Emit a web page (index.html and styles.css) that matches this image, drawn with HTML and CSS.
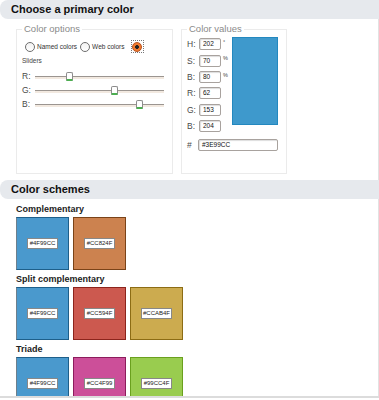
FILE: index.html
```html
<!DOCTYPE html>
<html>
<head>
<meta charset="utf-8">
<link rel="stylesheet" href="styles.css">
</head>
<body>
<div class="page">
  <div class="bar">Choose a primary color</div>
  <div class="primary">
    <fieldset class="box opts">
      <legend>Color options</legend>
      <div class="radios">
        <span class="radio"></span><span class="rlabel">Named colors</span>
        <span class="radio"></span><span class="rlabel">Web colors</span>
        <span class="focus"><span class="radio on"></span></span>
      </div>
      <div class="sltitle">Sliders</div>
      <div class="slider"><span class="slab">R:</span><div class="track"><span class="thumb" style="left:26%"></span></div></div>
      <div class="slider"><span class="slab">G:</span><div class="track"><span class="thumb" style="left:61%"></span></div></div>
      <div class="slider"><span class="slab">B:</span><div class="track"><span class="thumb" style="left:81%"></span></div></div>
    </fieldset>
    <fieldset class="box vals">
      <legend>Color values</legend>
      <div class="valgrid">
        <div class="fields">
          <div class="frow"><span class="flab">H:</span><span class="inp">202</span><span class="unit">°</span></div>
          <div class="frow"><span class="flab">S:</span><span class="inp">70</span><span class="unit">%</span></div>
          <div class="frow"><span class="flab">B:</span><span class="inp">80</span><span class="unit">%</span></div>
          <div class="frow"><span class="flab">R:</span><span class="inp">62</span></div>
          <div class="frow"><span class="flab">G:</span><span class="inp">153</span></div>
          <div class="frow"><span class="flab">B:</span><span class="inp">204</span></div>
        </div>
        <div class="preview"></div>
      </div>
      <div class="frow hexrow"><span class="flab">#</span><span class="inp hex">#3E99CC</span></div>
    </fieldset>
  </div>
  <div class="bar">Color schemes</div>
  <div class="schemes">
    <div class="stitle">Complementary</div>
    <div class="srow">
      <div class="sw blue"><span class="tag">#4F99CC</span></div>
      <div class="sw orange"><span class="tag">#CC824F</span></div>
    </div>
    <div class="stitle">Split complementary</div>
    <div class="srow">
      <div class="sw blue"><span class="tag">#4F99CC</span></div>
      <div class="sw red"><span class="tag">#CC594F</span></div>
      <div class="sw gold"><span class="tag">#CCAB4F</span></div>
    </div>
    <div class="stitle">Triade</div>
    <div class="srow">
      <div class="sw blue"><span class="tag">#4F99CC</span></div>
      <div class="sw magenta"><span class="tag">#CC4F99</span></div>
      <div class="sw green"><span class="tag">#99CC4F</span></div>
    </div>
  </div>
</div>
</body>
</html>
```

FILE: styles.css
```css
body {
  margin: 0;
  font-family: "Liberation Sans", Arial, sans-serif;
  background: #fff;
  color: #333;
}
.page {
  width: 379px;
  height: 396px;
  overflow: hidden;
  border-bottom: 2px solid #dcdcdc;
}
.bar {
  height: 19px;
  line-height: 19px;
  background: #e6e9ed;
  border-radius: 8px 0 0 8px;
  padding-left: 11px;
  font-size: 11px;
  font-weight: bold;
  color: #111;
}
.primary {
  display: flex;
  gap: 8px;
  height: 161px;
  box-sizing: border-box;
  padding: 5px 0 0 16px;
  border-right: 1px solid #e2e2e2;
}
.box {
  margin: 0;
  padding: 0 5px;
  border: 1px solid #ebebeb;
  box-sizing: border-box;
  height: 150px;
}
.box legend {
  font-size: 9.5px;
  line-height: 10px;
  color: #8a8a8a;
  padding: 0 2px;
}
.opts { width: 157px; }
.vals { width: 106px; }
.radios {
  display: flex;
  align-items: center;
  height: 13px;
  margin-top: 6px;
  padding-left: 3px;
}
.radio {
  width: 8px;
  height: 8px;
  border-radius: 50%;
  border: 1px solid #6d6d6d;
  background: linear-gradient(#f2f2f2, #fff);
  flex: none;
}
.rlabel {
  font-size: 6.5px;
  color: #333;
  margin: 0 3px 0 2px;
}
.focus {
  width: 13px;
  height: 13px;
  box-sizing: border-box;
  border: 1px dotted #777;
  display: flex;
  align-items: center;
  justify-content: center;
  margin-left: 3px;
}
.radio.on {
  border-color: #b8501a;
  background: radial-gradient(circle, #222 0 1.6px, #f07a30 2.2px);
}
.sltitle {
  font-size: 6.5px;
  color: #444;
  margin: 3px 0 0 0;
  height: 10px;
  line-height: 10px;
}
.slider {
  display: flex;
  align-items: center;
  height: 14px;
}
.sltitle + .slider { margin-top: 3px; }
.slab {
  width: 13px;
  font-size: 8.5px;
  color: #4a4a4a;
}
.track {
  position: relative;
  width: 129px;
  height: 2px;
  background: #f2e9e0;
  border-top: 1px solid #9b9590;
  margin-top: 2px;
}
.thumb {
  position: absolute;
  top: -5px;
  width: 5px;
  height: 6px;
  margin-left: -3px;
  background: #fff;
  border: 1px solid #8c8c8c;
  border-bottom: 2px solid #4caf50;
  border-radius: 2px 2px 1px 1px;
}
.valgrid {
  display: flex;
  margin-top: 2px;
}
.fields {
  width: 45px;
}
.frow {
  display: flex;
  align-items: center;
  height: 16.4px;
}
.flab {
  width: 12px;
  font-size: 8.5px;
  color: #4a4a4a;
}
.inp {
  width: 22px;
  height: 12px;
  box-sizing: border-box;
  border: 1px solid #a8a29e;
  border-radius: 2px;
  box-shadow: inset 1px 1px 1px #ddd;
  font-size: 6.5px;
  line-height: 10px;
  padding-left: 3px;
  color: #111;
  background: #fff;
}
.unit {
  font-size: 5.5px;
  margin-left: 2px;
  align-self: flex-start;
  margin-top: 3px;
  color: #444;
}
.preview {
  width: 46px;
  height: 88px;
  box-sizing: border-box;
  background: #3e99cc;
  border: 1px solid #2388bf;
  margin-top: 1px;
}
.hexrow { margin-top: 2px; }
.inp.hex { width: 80px; margin-left: -1px; }
.schemes {
  padding: 4px 0 0 16px;
  height: 200px;
  border-right: 1px solid #e2e2e2;
}
.stitle {
  font-size: 9px;
  font-weight: bold;
  color: #222;
  height: 14px;
  line-height: 12px;
}
.srow {
  display: flex;
  gap: 4px;
  margin-bottom: 3px;
}
.sw {
  width: 53px;
  height: 53px;
  box-sizing: border-box;
  border: 1px solid;
  display: flex;
  align-items: center;
  justify-content: center;
}
.tag {
  background: #fff;
  border: 1px solid #888;
  font-size: 6px;
  line-height: 9px;
  width: 29px;
  text-align: center;
  color: #222;
}
.blue { background: #4a99cd; border-color: #1e5f8a #1e5f8a #1e5f8a #6d7f8c; }
.orange { background: #cc824f; border-color: #7a4318; }
.red { background: #cc594f; border-color: #8c241c; }
.gold { background: #ccab4f; border-color: #8c6c14; }
.magenta { background: #cc4f99; border-color: #8c1c5c; }
.green { background: #99cc4f; border-color: #6aa01e; }
```
